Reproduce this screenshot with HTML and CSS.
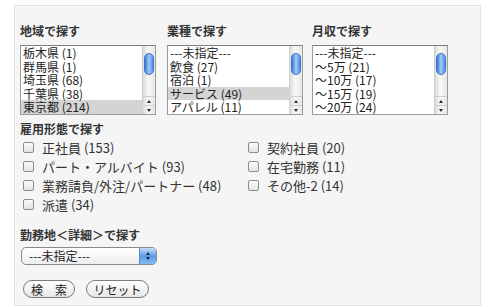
FILE: index.html
```html
<!DOCTYPE html>
<html lang="ja">
<head>
    <meta charset="UTF-8">
    <title>求人検索</title>
    <link rel="stylesheet" href="styles.css">
</head>
<body>
    <div class="panel">
        <div class="lists">
            <div class="list-col">
                <h3 class="title">地域で探す</h3>
                <div class="listbox">
                    <ul class="options">
                        <li>栃木県 (1)</li>
                        <li>群馬県 (1)</li>
                        <li>埼玉県 (68)</li>
                        <li>千葉県 (38)</li>
                        <li class="selected">東京都 (214)</li>
                    </ul>
                    <div class="scrollbar">
                        <div class="track"><div class="thumb"></div></div>
                        <div class="arrow"><span class="tri up"></span></div>
                        <div class="arrow"><span class="tri down"></span></div>
                    </div>
                </div>
            </div>
            <div class="list-col">
                <h3 class="title">業種で探す</h3>
                <div class="listbox">
                    <ul class="options">
                        <li>---未指定---</li>
                        <li>飲食 (27)</li>
                        <li>宿泊 (1)</li>
                        <li class="selected">サービス (49)</li>
                        <li>アパレル (11)</li>
                    </ul>
                    <div class="scrollbar">
                        <div class="track"><div class="thumb"></div></div>
                        <div class="arrow"><span class="tri up"></span></div>
                        <div class="arrow"><span class="tri down"></span></div>
                    </div>
                </div>
            </div>
            <div class="list-col">
                <h3 class="title">月収で探す</h3>
                <div class="listbox">
                    <ul class="options">
                        <li>---未指定---</li>
                        <li>～5万 (21)</li>
                        <li>～10万 (17)</li>
                        <li>～15万 (19)</li>
                        <li>～20万 (24)</li>
                    </ul>
                    <div class="scrollbar">
                        <div class="track"><div class="thumb"></div></div>
                        <div class="arrow"><span class="tri up"></span></div>
                        <div class="arrow"><span class="tri down"></span></div>
                    </div>
                </div>
            </div>
        </div>

        <h3 class="title title-type">雇用形態で探す</h3>
        <div class="checks">
            <label class="check"><span class="cbox"></span>正社員 (153)</label>
            <label class="check"><span class="cbox"></span>契約社員 (20)</label>
            <label class="check"><span class="cbox"></span>パート・アルバイト (93)</label>
            <label class="check"><span class="cbox"></span>在宅勤務 (11)</label>
            <label class="check"><span class="cbox"></span>業務請負/外注/パートナー (48)</label>
            <label class="check"><span class="cbox"></span>その他-2 (14)</label>
            <label class="check"><span class="cbox"></span>派遣 (34)</label>
        </div>

        <h3 class="title title-area">勤務地＜詳細＞で探す</h3>
        <div class="popup">
            <span class="popup-text">---未指定---</span>
            <span class="popup-arrows"><span class="tri up"></span><span class="tri down"></span></span>
        </div>

        <div class="buttons">
            <span class="btn btn-search">検　索</span>
            <span class="btn btn-reset">リセット</span>
        </div>
    </div>
</body>
</html>
```

FILE: styles.css
```css
* {
    box-sizing: border-box;
}

body {
    margin: 0;
    background-color: #ffffff;
    font-family: "Noto Sans CJK JP", sans-serif;
    color: #222222;
}

.panel {
    margin: 5px 0 0 14px;
    width: 467px;
    height: 301px;
    border: 1px solid #e2e2e2;
    background-color: #f5f5f5;
    padding: 17px 0 0 5px;
}

.title {
    margin: 0;
    font-size: 12px;
    line-height: 16px;
    font-weight: bold;
    color: #333333;
}

.lists {
    display: grid;
    grid-template-columns: 147px 145px 136px;
}

.listbox {
    display: flex;
    width: 136px;
    height: 70px;
    margin-top: 6px;
    border: 1px solid #9c9c9c;
    border-top-color: #7e7e7e;
    background-color: #ffffff;
}

.options {
    flex: 1;
    list-style: none;
    margin: 0;
    padding: 0;
    font-size: 12px;
    line-height: 13.6px;
    overflow: hidden;
}

.options li {
    padding-left: 2px;
    white-space: nowrap;
}

.options li.selected {
    background-color: #d4d4d4;
}

.scrollbar {
    width: 13px;
    display: flex;
    flex-direction: column;
    background: linear-gradient(to right, #dcdcdc, #f8f8f8 45%, #e6e6e6);
    border-left: 1px solid #d0d0d0;
}

.track {
    flex: 1;
    padding: 7px 1px 0 1px;
}

.thumb {
    height: 22px;
    border-radius: 5px;
    border: 1px solid #3e72c2;
    background: linear-gradient(to right, #3a7ad8, #9fcdf7 50%, #4d8fe4);
}

.arrow {
    height: 9px;
    display: flex;
    align-items: center;
    justify-content: center;
    border-top: 1px solid #cfcfcf;
}

.tri {
    width: 0;
    height: 0;
    border-left: 2.5px solid transparent;
    border-right: 2.5px solid transparent;
}

.tri.up {
    border-bottom: 3px solid #2a2a2a;
}

.tri.down {
    border-top: 3px solid #2a2a2a;
}

.title-type {
    margin-top: 6px;
}

.checks {
    display: grid;
    grid-template-columns: 225px auto;
    padding-left: 3px;
    margin-top: 1px;
}

.check {
    display: flex;
    align-items: center;
    gap: 8px;
    height: 19px;
    font-size: 13px;
    color: #333333;
    white-space: nowrap;
}

.cbox {
    width: 11px;
    height: 11px;
    border: 1px solid #8c8c8c;
    border-radius: 2px;
    background: linear-gradient(#fbfbfb, #e4e4e4);
}

.title-area {
    margin-top: 13px;
}

.popup {
    display: flex;
    width: 136px;
    height: 18px;
    margin-top: 4px;
    margin-left: 1px;
    border: 1px solid #8a8a8a;
    border-radius: 5px;
    background: linear-gradient(#ffffff, #eeeeee);
    overflow: hidden;
}

.popup-text {
    flex: 1;
    padding-left: 7px;
    font-size: 12px;
    line-height: 16px;
}

.popup-arrows {
    width: 17px;
    display: flex;
    flex-direction: column;
    align-items: center;
    justify-content: center;
    gap: 2px;
    border-left: 1px solid #5d86c0;
    background: linear-gradient(#c6def8, #5b9be8 50%, #86bbf2);
}

.popup-arrows .tri.up {
    border-bottom-color: #1f2a3a;
}

.popup-arrows .tri.down {
    border-top-color: #1f2a3a;
}

.buttons {
    display: flex;
    gap: 11px;
    margin-top: 15px;
    padding-left: 3px;
}

.btn {
    display: flex;
    align-items: center;
    justify-content: center;
    height: 18px;
    border: 1px solid #7b7b7b;
    border-radius: 9px;
    background: linear-gradient(#ffffff, #e6e6e6);
    font-size: 12px;
    color: #222222;
}

.btn-search {
    width: 52px;
}

.btn-reset {
    width: 63px;
}
```
